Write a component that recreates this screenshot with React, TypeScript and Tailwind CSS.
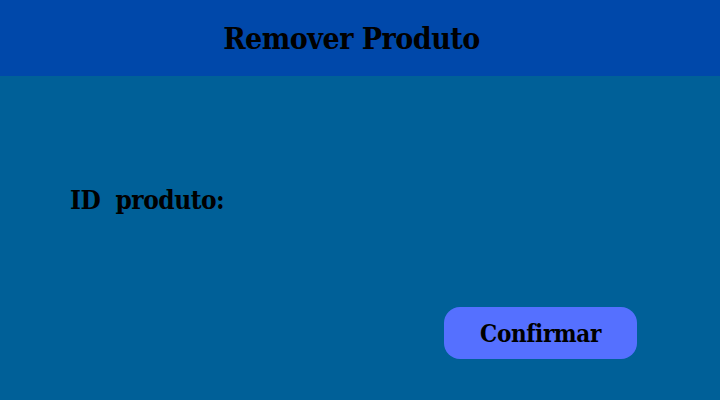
export default function App() {
  const font = { fontFamily: '"DejaVu Serif Condensed", "DejaVu Serif", serif' };
  return (
    <div className="w-[720px] h-[400px] flex flex-col bg-[#006098] text-black" style={font}>
      <div className="h-[76px] bg-[#0048AA] flex items-center justify-center">
        <h1 className="text-[30px] font-bold leading-none tracking-[-0.5px] pt-[2px] pr-[17px]">Remover Produto</h1>
      </div>
      <div className="flex-1 flex flex-col">
        <div className="pl-[70px] pt-[111px] text-[26px] font-bold leading-none tracking-[-0.5px]">
          ID&nbsp; produto:
        </div>
        <div className="flex justify-end pr-[83px] mt-[94px]">
          <button className="w-[193px] h-[52px] rounded-[16px] bg-[#5570FF] text-[24px] font-bold leading-none tracking-[-0.4px] pt-[2px]">
            Confirmar
          </button>
        </div>
      </div>
    </div>
  );
}
